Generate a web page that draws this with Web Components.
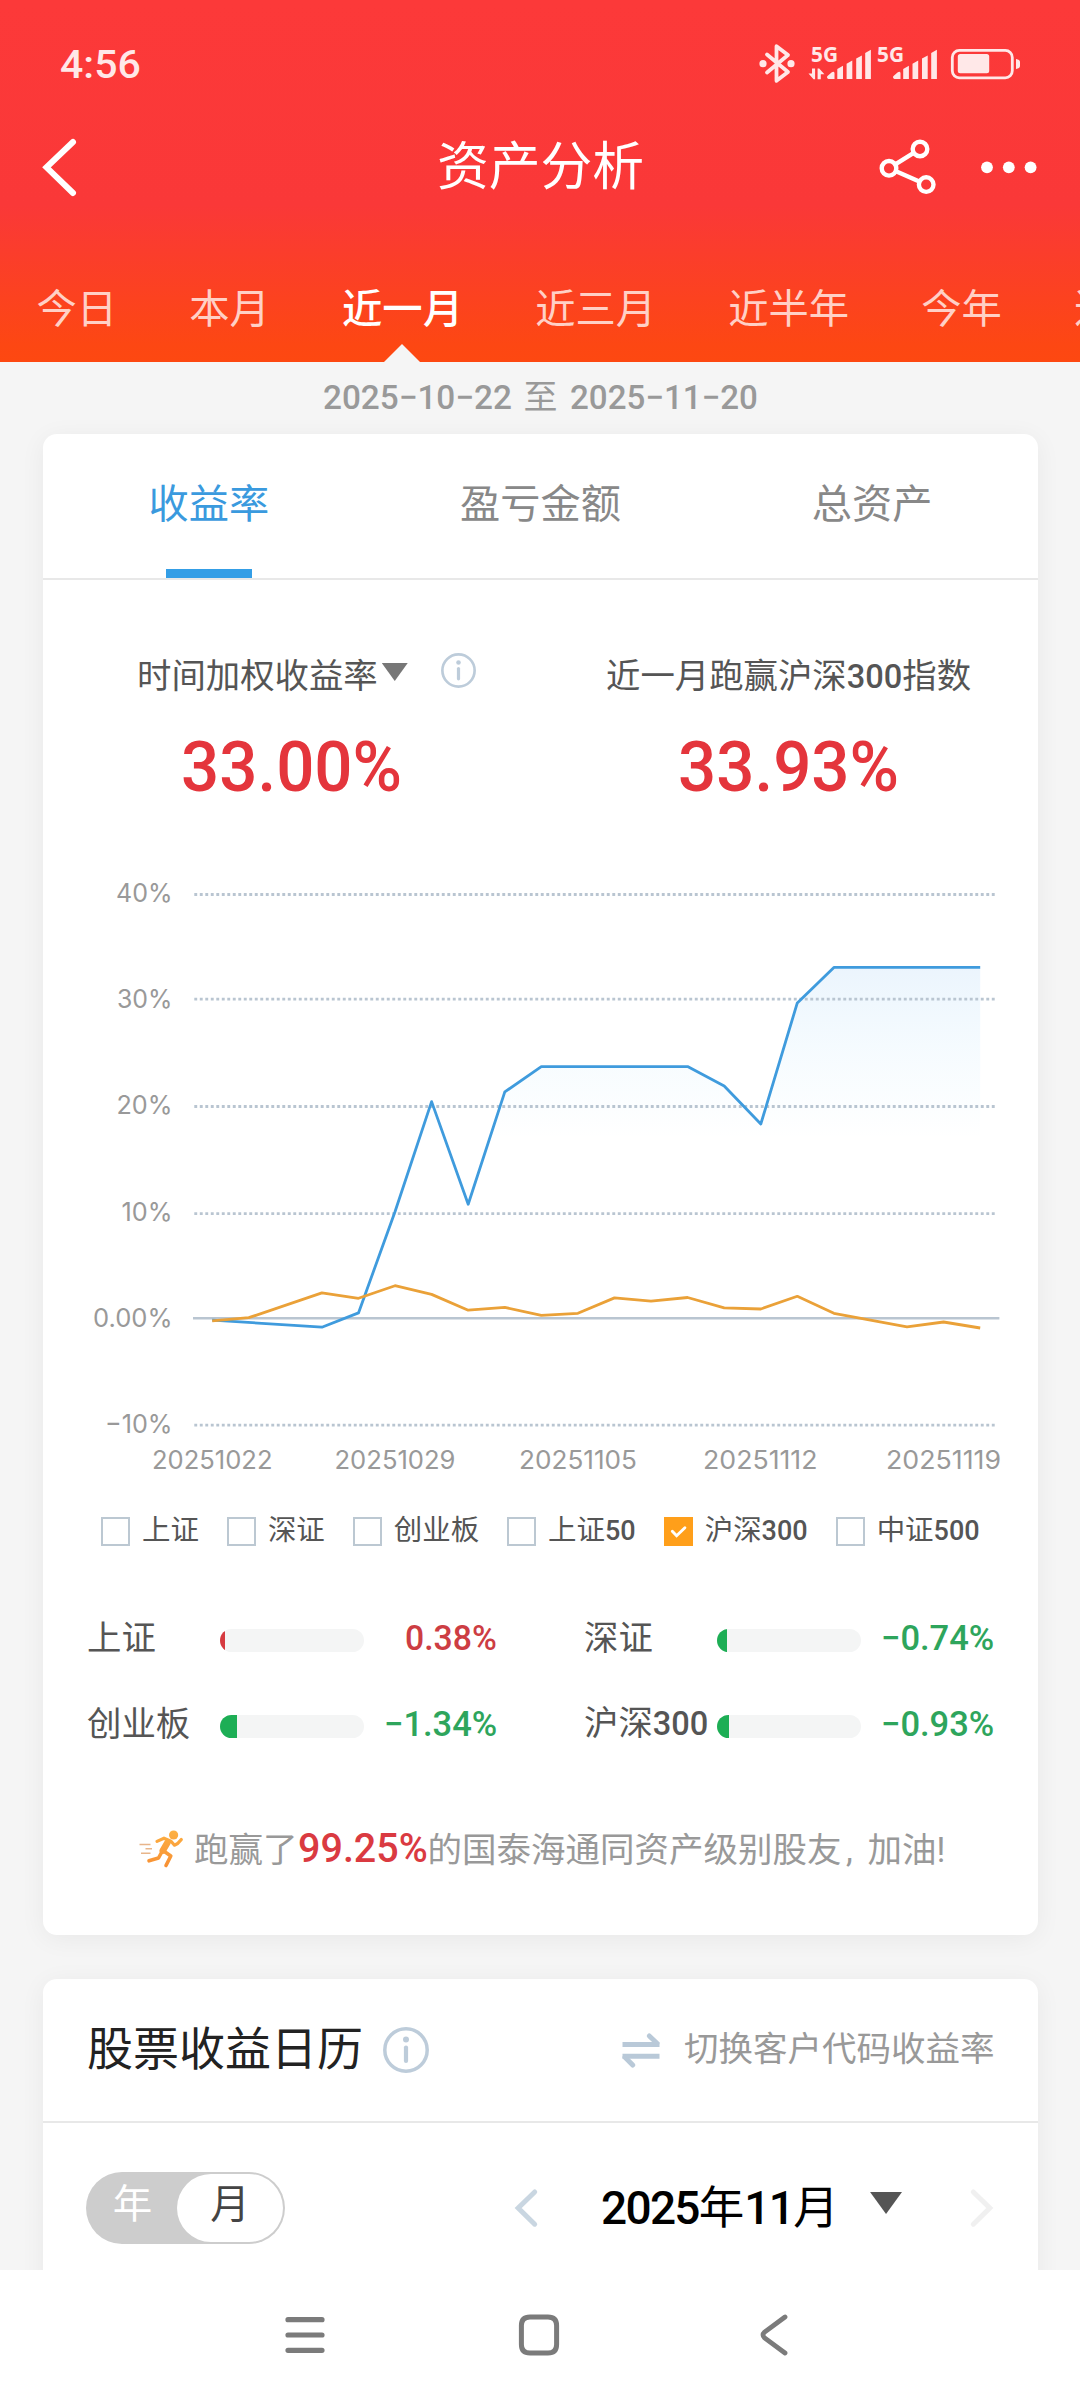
<!DOCTYPE html>
<html lang="zh-CN">
<head>
<meta charset="utf-8">
<title>资产分析</title>
<style>
html,body{margin:0;padding:0}
body{width:1080px;height:2400px;overflow:hidden;background:#f5f5f5;font-family:Roboto,"Noto Sans CJK SC",sans-serif;color:#555}
</style>
</head>
<body>
<asset-page></asset-page>
<script>
const define = (name, html, setup) => {
  const tpl = document.createElement('template');
  tpl.innerHTML = html;
  customElements.define(name, class extends HTMLElement {
    connectedCallback() {
      if (this.shadowRoot) return;
      const root = this.attachShadow({ mode: 'open' });
      root.append(tpl.content.cloneNode(true));
      if (setup) setup(this, root);
    }
  });
};
const withDigits = t => t.replace(/\d+/g, d => `<span class="d">${d}</span>`);

/* A number squeezed or stretched to a given advance width */
define('fit-num', `<style>
:host{display:inline-block;white-space:nowrap;font-weight:500}
span{display:inline-block;transform-origin:0 50%}
</style><span><slot></slot></span>`, (el, root) => {
  const w = +el.getAttribute('w');
  const s = root.querySelector('span');
  const natural = s.offsetWidth;
  el.style.width = w + 'px';
  if (natural) s.style.transform = `scaleX(${w / natural})`;
});

define('status-bar', `<style>
:host{display:flex;height:130px;justify-content:space-between;align-items:flex-start;padding:0 56px 0 60px;color:#ffe8e8}
.time{font:500 39px/130px Roboto,sans-serif;height:130px}
svg{display:block;margin-top:40px}
text{font:700 20.5px "Noto Sans",sans-serif;fill:#ffe8e8}
</style>
<fit-num class="time" w="81">4:56</fit-num>
<svg width="268" height="48" viewBox="756 40 268 48">
 <g fill="none" stroke="#ffe8e8" stroke-width="3.8" stroke-linejoin="round" stroke-linecap="round">
  <path d="M767 54.5 L788 72 L776.5 80.8 V46.2 L788 55 L767 72.5"/></g>
 <g fill="#ffe8e8"><circle cx="763" cy="63.7" r="3.6"/><circle cx="791" cy="63.7" r="3.6"/>
  <text x="811" y="62" textLength="27" lengthAdjust="spacingAndGlyphs">5G</text>
  <text x="877" y="62" textLength="27" lengthAdjust="spacingAndGlyphs">5G</text>
  <path d="M812 68.5h3.1V79.2h-1.6L808.5 73.4H812zM817.6 68.5h1.6l5.2 5.8h-3.6V79.2h-3.2z"/>
  <path d="M828.5 79a1.8 1.8 0 0 1-1-3l4-3.6q2.8-1.4 3 .8V79zM837.3 69l5.7-3.2V79h-5.7zM846.6 63.8l5.7-3.2V79h-5.7zM856.2 58.6l5.7-3.2V79h-5.7zM865.2 53l5.7-3.2V79h-5.7z"/>
  <path d="M894.5 79a1.8 1.8 0 0 1-1-3l4-3.6q2.8-1.4 3 .8V79zM903.2 69l5.7-3.2V79h-5.7zM912.5 63.8l5.7-3.2V79h-5.7zM922 58.6l5.7-3.2V79h-5.7zM931.2 53l5.7-3.2V79h-5.7z"/>
  <rect x="957.8" y="54" width="31.4" height="19.3" rx="2.5"/>
  <path d="M1016 59q4 .6 4 3v4q0 2.4-4 3z"/></g>
 <rect x="952.3" y="50.4" width="60" height="27.4" rx="7" fill="none" stroke="#ffe8e8" stroke-width="2.8"/>
</svg>`);

define('nav-bar', `<style>
:host{display:grid;grid-template-columns:1fr auto 1fr;align-items:center;height:74px;padding:0 40px 0 40px;color:#fff}
h1{margin:0;font-size:51.8px;line-height:72px;font-weight:400;padding:2px 0 0 1px;height:72px}
svg{display:block}
.r{justify-self:end}
</style>
<svg width="40" height="66" viewBox="40 134 40 66"><path d="M73 142 L46.5 167.3 L73 193" fill="none" stroke="#fff" stroke-width="6" stroke-linecap="round" stroke-linejoin="miter"/></svg>
<h1>资产分析</h1>
<svg class="r" width="164" height="66" viewBox="876 134 164 66">
 <g fill="none" stroke="#fff" stroke-width="4.4"><circle cx="920" cy="149" r="7.3"/><circle cx="889" cy="168.3" r="7.3"/><circle cx="926.2" cy="184.6" r="7.3"/><path d="M895.3 164.3 L913.7 152.9M896 171.3 L919.3 181.6"/></g>
 <g fill="#fff"><circle cx="987" cy="167.3" r="5.9"/><circle cx="1008.8" cy="167.3" r="5.9"/><circle cx="1030.6" cy="167.3" r="5.9"/></g>
</svg>`);

define('period-tab', `<style>
:host{display:block;position:relative;flex:none;font-size:40.3px;line-height:112px;height:108px;color:#ffd0c6}
:host([active]){color:#fff;font-weight:500}
:host([active])::after{content:"";position:absolute;left:50%;bottom:0;margin-left:-19px;border:solid transparent;border-width:0 18px 18px;border-bottom-color:#f5f5f5}
</style><slot></slot>`);

define('app-header', `<style>
:host{display:flex;flex-direction:column;height:362px;background:linear-gradient(#fc3939 0,#fa3838 205px,#fd4713 345px,#fd4811 362px)}
nav{display:flex;gap:72.2px;padding:0 0 0 36.5px;height:108px;margin-top:auto;overflow:hidden;box-sizing:border-box}
</style>
<status-bar></status-bar><nav-bar></nav-bar>
<nav><period-tab>今日</period-tab><period-tab>本月</period-tab><period-tab active>近一月</period-tab><period-tab>近三月</period-tab><period-tab>近半年</period-tab><period-tab>今年</period-tab><period-tab>近一年</period-tab></nav>`);

define('date-range', `<style>
:host{display:flex;flex:none;justify-content:center;align-items:baseline;height:72px;box-sizing:border-box;line-height:70px;font-size:34px;color:#999}
.z{padding:0 12px 0 12px;font-size:34px}
</style><fit-num w="189">2025−10−22</fit-num><span class="z">至</span><fit-num w="188">2025−11−20</fit-num>`);

define('ui-card', `<style>
:host{display:flex;flex-direction:column;margin:0 42px 0 43px;background:#fff;border-radius:14px;box-shadow:0 4px 26px rgba(0,0,0,.055)}
</style><slot></slot>`);

define('view-tabs', `<style>
:host{display:grid;grid-template-columns:repeat(3,1fr);height:144px;border-bottom:2px solid #e8e8e8;font-size:40.2px;line-height:142px;color:#888;text-align:center}
div{display:flex;flex-direction:column;align-items:center;height:144px}
span{height:135px}
.on{color:#3a9ade}
.on::after{content:"";width:86px;height:9px;background:#349ee6}
</style><div class="on"><span>收益率</span></div><div><span>盈亏金额</span></div><div><span>总资产</span></div>`);

define('info-icon', `<style>:host{display:block}svg{display:block;width:100%;height:100%}</style>
<svg viewBox="0 0 46 46"><circle cx="23" cy="23" r="21.2" fill="none" stroke="#bdccda" stroke-width="3.5"/><circle cx="23" cy="12.6" r="3" fill="#bdccda"/><path d="M23 20.5V34" stroke="#bdccda" stroke-width="4.2" stroke-linecap="round"/></svg>`);

define('down-caret', `<style>:host{display:block;width:var(--w);height:var(--h);background:var(--c);clip-path:polygon(0 0,100% 0,50% 100%)}</style>`);

define('metric-summary', `<style>
:host{display:flex;height:240px;padding:67px 0 0;box-sizing:border-box}
section{display:flex;flex-direction:column}
.a{width:482px;flex:none;padding-left:94px;box-sizing:border-box}.b{padding-left:81px}
.l{display:flex;align-items:flex-start;font-size:34.4px;line-height:59px;height:60px;white-space:nowrap}
.d{font-size:32.6px;font-weight:500}
down-caret{--w:26px;--h:18px;--c:#777;margin:16px 0 0 4px}
info-icon{width:35px;height:35px;margin:6px 0 0 33px}
fit-num{font-size:70px;line-height:80px;height:80px;color:#e4353c;margin-top:20px}
.a fit-num{margin-left:44px}.b fit-num{margin-left:72px}
</style>
<section class="a"><div class="l"><span>时间加权收益率</span><down-caret></down-caret><info-icon></info-icon></div><fit-num w="221">33.00%</fit-num></section>
<section class="b"><div class="l"><span>近一月跑赢沪深<span class="d">300</span>指数</span></div><fit-num w="221">33.93%</fit-num></section>`);

define('return-chart', `<style>
:host{display:block;height:670px}
svg{display:block}
text{font:400 25.5px Inter,sans-serif;fill:#999}
</style>
<svg width="995" height="670" viewBox="43 819.2 995 670">
<defs><linearGradient id="fade" gradientUnits="userSpaceOnUse" x1="0" y1="967" x2="0" y2="1140"><stop offset="0" stop-color="#2f8fe8" stop-opacity=".095"/><stop offset=".5" stop-color="#35b0f5" stop-opacity=".045"/><stop offset="1" stop-color="#35b0f5" stop-opacity="0"/></linearGradient></defs>
<g class="plot"></g></svg>`, (el, root) => {
  const grid = [894.7, 999.3, 1106.7, 1213.8, 1425.4];
  const X = i => (212.2 + i * 36.57).toFixed(1);
  const join = pts => pts.map(([i, y]) => X(i) + ',' + y).join(' ');
  const mine = [[0,1320.3],[3,1327.4],[4,1313.1],[5,1211.9],[6,1101.8],[7,1204.4],[8,1092.1],[9,1066.8],[13,1066.8],[14,1086.2],[15,1124.2],[16,1003.1],[17,967.6],[21,967.6]];
  const hs300 = [[0,1321],[1,1317.9],[3,1293],[4,1298.5],[5,1285.9],[6,1294.6],[7,1310.4],[8,1307.6],[9,1315.5],[10,1313.5],[11,1298.1],[12,1301.3],[13,1297.7],[14,1308],[15,1309.2],[16,1296.5],[17,1313.5],[19,1327],[20,1322.2],[21,1328.2]];
  const yl = [['40%',116,893],['30%',117,999],['20%',116.5,1105.3],['10%',121.5,1212],['0.00%',93,1318],['−10%',105,1424.3]];
  const xl = [['20251022',152,120.5],['20251029',334.5,121],['20251105',519,118],['20251112',703,114.5],['20251119',886,115]];
  let s = `<polygon points="${X(0)},1319 ${join(mine)} ${X(21)},1319" fill="url(#fade)"/>`;
  for (const y of grid) s += `<path d="M194.3 ${y}H996" stroke="#b9c5d1" stroke-width="2.8" stroke-dasharray="2.9 2.6"/>`;
  s += `<path d="M193 1318.4H999.4" stroke="#b9c5d1" stroke-width="2.6"/>`;
  s += `<polyline points="${join(mine)}" fill="none" stroke="#3f9bdd" stroke-width="2.8" stroke-linejoin="round"/>`;
  s += `<polyline points="${join(hs300)}" fill="none" stroke="#eaa138" stroke-width="2.8" stroke-linejoin="round"/>`;
  for (const [t, x, y] of yl) s += `<text x="${x}" y="${y + 9}" textLength="${172.5 - x}" lengthAdjust="spacingAndGlyphs">${t}</text>`;
  for (const [t, x, w] of xl) s += `<text x="${x}" y="1469" textLength="${w}" lengthAdjust="spacingAndGlyphs">${t}</text>`;
  root.querySelector('.plot').innerHTML = s;
});

define('index-check', `<style>
:host{display:flex;align-items:flex-start;gap:12px;height:60px;font-size:28.45px;line-height:61px;white-space:nowrap}
i{display:block;width:29px;height:29px;box-sizing:border-box;border:2px solid #bcc8d2;margin-top:17px}
:host([checked]) i{border:0;background:#ff9f1a}
svg{display:none}
:host([checked]) svg{display:block}
.d{font-size:27px;font-weight:500}
</style><i><svg width="29" height="29" viewBox="0 0 29 29"><path d="M8.3 14.2l4.3 4.6 8.3-8" fill="none" stroke="#fff" stroke-width="2.9" stroke-linecap="round"/></svg></i><span class="t"></span>`,
(el, root) => { root.querySelector('.t').innerHTML = withDigits(el.getAttribute('name')); });

define('index-picker', `<style>:host{display:flex;gap:28px;height:60px;padding:11px 0 0 58px}</style>
<index-check name="上证"></index-check><index-check name="深证"></index-check><index-check name="创业板"></index-check><index-check name="上证50"></index-check><index-check name="沪深300" checked></index-check><index-check name="中证500"></index-check>`);

define('index-row', `<style>
:host{display:flex;align-items:center;height:86px;line-height:87px;font-size:34.4px;white-space:nowrap}
.n{width:133px}.d{font-size:32.6px;font-weight:500}
.bar{width:144px;height:23px;border-radius:12px;background:#f4f5f5;overflow:hidden;margin-top:4px}
.bar i{display:block;height:100%;background:#1dae55}
fit-num{margin-left:auto;font-size:34.5px;color:#2ea55c}
:host([up]) .bar i{background:#d63a40}:host([up]) fit-num{color:#cd3d43}
</style><span class="n"></span><span class="bar"><i></i></span>`, (el, root) => {
  root.querySelector('.n').innerHTML = withDigits(el.getAttribute('name'));
  root.querySelector('i').style.width = el.getAttribute('fill') + 'px';
  const v = document.createElement('fit-num');
  v.setAttribute('w', el.getAttribute('w'));
  v.textContent = el.getAttribute('value');
  root.append(v);
});

define('index-grid', `<style>:host{display:grid;grid-template-columns:410px 410px;column-gap:87px;padding:35px 0 0 44px}</style>
<index-row name="上证" value="0.38%" fill="5.3" w="92" up></index-row><index-row name="深证" value="−0.74%" fill="10" w="113"></index-row>
<index-row name="创业板" value="−1.34%" fill="17" w="113"></index-row><index-row name="沪深300" value="−0.93%" fill="12" w="113"></index-row>`);

define('beat-line', `<style>
:host{display:flex;align-items:baseline;height:168px;padding:39px 0 0 96px;box-sizing:border-box;line-height:85px;font-size:34.5px;color:#999;white-space:nowrap}
svg{align-self:flex-start;margin:24px 10px 0 0;flex:none}
fit-num{font-size:41px;color:#da3a41;height:86px}
.c{width:21.5px;padding-left:4.5px}
</style>
<svg width="45" height="38" viewBox="0 0 45 38">
 <defs><linearGradient id="g" x1="0" x2="0" y1="0" y2="38" gradientUnits="userSpaceOnUse"><stop stop-color="#fdb143"/><stop offset="1" stop-color="#f78f33"/></linearGradient></defs>
 <circle cx="34.6" cy="5" r="4.6" fill="url(#g)"/>
 <g fill="none" stroke="url(#g)" stroke-linecap="round" stroke-linejoin="round"><path d="M18 11.4L25 8.2L32 11.2L35.5 15.2Q39 14 42.3 9.5" stroke-width="3.2"/><path d="M28.6 12.4L23.8 20.6" stroke-width="6.6"/><path d="M24 20.5L31.8 26L27 35.5" stroke-width="3.6"/><path d="M22.5 22.5L19.5 28L10 30.8" stroke-width="3.6"/></g>
 <path d="M0.5 14.5h11M6.5 18.8h6.5M2 23.2h9.5" stroke="#e8b58a" stroke-width="1.6"/>
</svg><span>跑赢了</span><fit-num w="130">99.25%</fit-num><span>的国泰海通同资产级别股友</span><span class="c">,</span><span>加油!</span>`);

define('calendar-head', `<style>
:host{display:flex;align-items:flex-start;height:142px;border-bottom:2px solid #e8e8e8;padding:0 43.5px 0 44px;line-height:140px;white-space:nowrap}
h2{margin:0;font-size:46px;font-weight:400;color:#222}
info-icon{width:46px;height:46px;margin:48px auto 0 20px}
svg{margin:53px 23px 0 0}
span{font-size:34.5px;color:#999}
</style><h2>股票收益日历</h2><info-icon></info-icon>
<svg width="40" height="36" viewBox="0 0 40 36"><g fill="none" stroke="#b9c9d8" stroke-width="5"><path d="M1.5 12.6H38.5" /><path d="M36 11.3L28.3 4" stroke-linecap="round"/><path d="M1.5 24.2H38.5"/><path d="M4 25.2L11.7 33" stroke-linecap="round"/></g></svg><span>切换客户代码收益率</span>`);

define('unit-toggle', `<style>
:host{display:flex;width:199px;height:72px;border-radius:36px;background:#cdcdcd;padding:2px;box-sizing:border-box;font-size:39.5px;line-height:62px;color:#fff}
span{width:89px;text-align:center}
b{font-weight:400;width:106px;height:68px;border-radius:34px;background:#fff;color:#444;text-align:center;box-sizing:border-box}
</style><span>年</span><b>月</b>`);

define('calendar-nav', `<style>
:host{display:flex;align-items:center;height:170px;padding:0 43px;white-space:nowrap}
unit-toggle{margin-right:228px}
svg{display:block;flex:none}
.m{font-size:45.5px;line-height:72px;color:#000;margin-left:62px;width:241px;height:73px}
.d{font-size:46px;font-weight:500;letter-spacing:-1.7px}
down-caret{--w:32px;--h:22px;--c:#555;margin:-10px 0 0 28.5px}
.nx{margin-left:67px}
</style><unit-toggle></unit-toggle>
<svg width="26" height="42" viewBox="0 0 26 42"><path d="M21.7 5L5.2 21L21.7 37.2" fill="none" stroke="#c9d6e1" stroke-width="5" stroke-linecap="round"/></svg>
<span class="m"><span class="d">2025</span>年<span class="d">11</span>月</span><down-caret></down-caret>
<svg class="nx" width="26" height="42" viewBox="0 0 26 42"><path d="M4.3 5L20.8 21L4.3 37.2" fill="none" stroke="#f0f0f0" stroke-width="5" stroke-linecap="round"/></svg>`);

define('system-nav', `<style>
:host{display:flex;align-items:center;justify-content:center;gap:190.5px;height:130px;background:#fff;padding-right:2px}
svg{display:block}
</style>
<svg width="44" height="44" viewBox="0 0 44 44"><path d="M5 6.7H39M5 22H39M5 37.3H39" stroke="#7b7b7b" stroke-width="5.2" stroke-linecap="round"/></svg>
<svg width="44" height="44" viewBox="0 0 44 44"><path d="M13 4H31Q39.6 4 39.6 12.5V31.5Q39.6 40 31 40H13Q4.4 40 4.4 31.5V12.5Q4.4 4 13 4Z" fill="none" stroke="#7b7b7b" stroke-width="5"/></svg>
<svg width="44" height="44" viewBox="0 0 44 44"><path d="M33 4L12.6 19Q9.4 22 12.6 25L33 40" fill="none" stroke="#7b7b7b" stroke-width="4.8" stroke-linecap="round"/></svg>`);

define('asset-page', `<style>
:host{display:flex;flex-direction:column;width:1080px;height:2400px;overflow:hidden;background:#f5f5f5}
main{display:flex;flex-direction:column;height:1908px;overflow:hidden}
.one{height:1501px;flex:none}
.two{margin-top:44px;height:320px;flex:none}
</style>
<app-header></app-header>
<main><date-range></date-range>
<ui-card class="one"><view-tabs></view-tabs><metric-summary></metric-summary><return-chart></return-chart><index-picker></index-picker><index-grid></index-grid><beat-line></beat-line></ui-card>
<ui-card class="two"><calendar-head></calendar-head><calendar-nav></calendar-nav></ui-card></main>
<system-nav></system-nav>`);
</script>
</body>
</html>
